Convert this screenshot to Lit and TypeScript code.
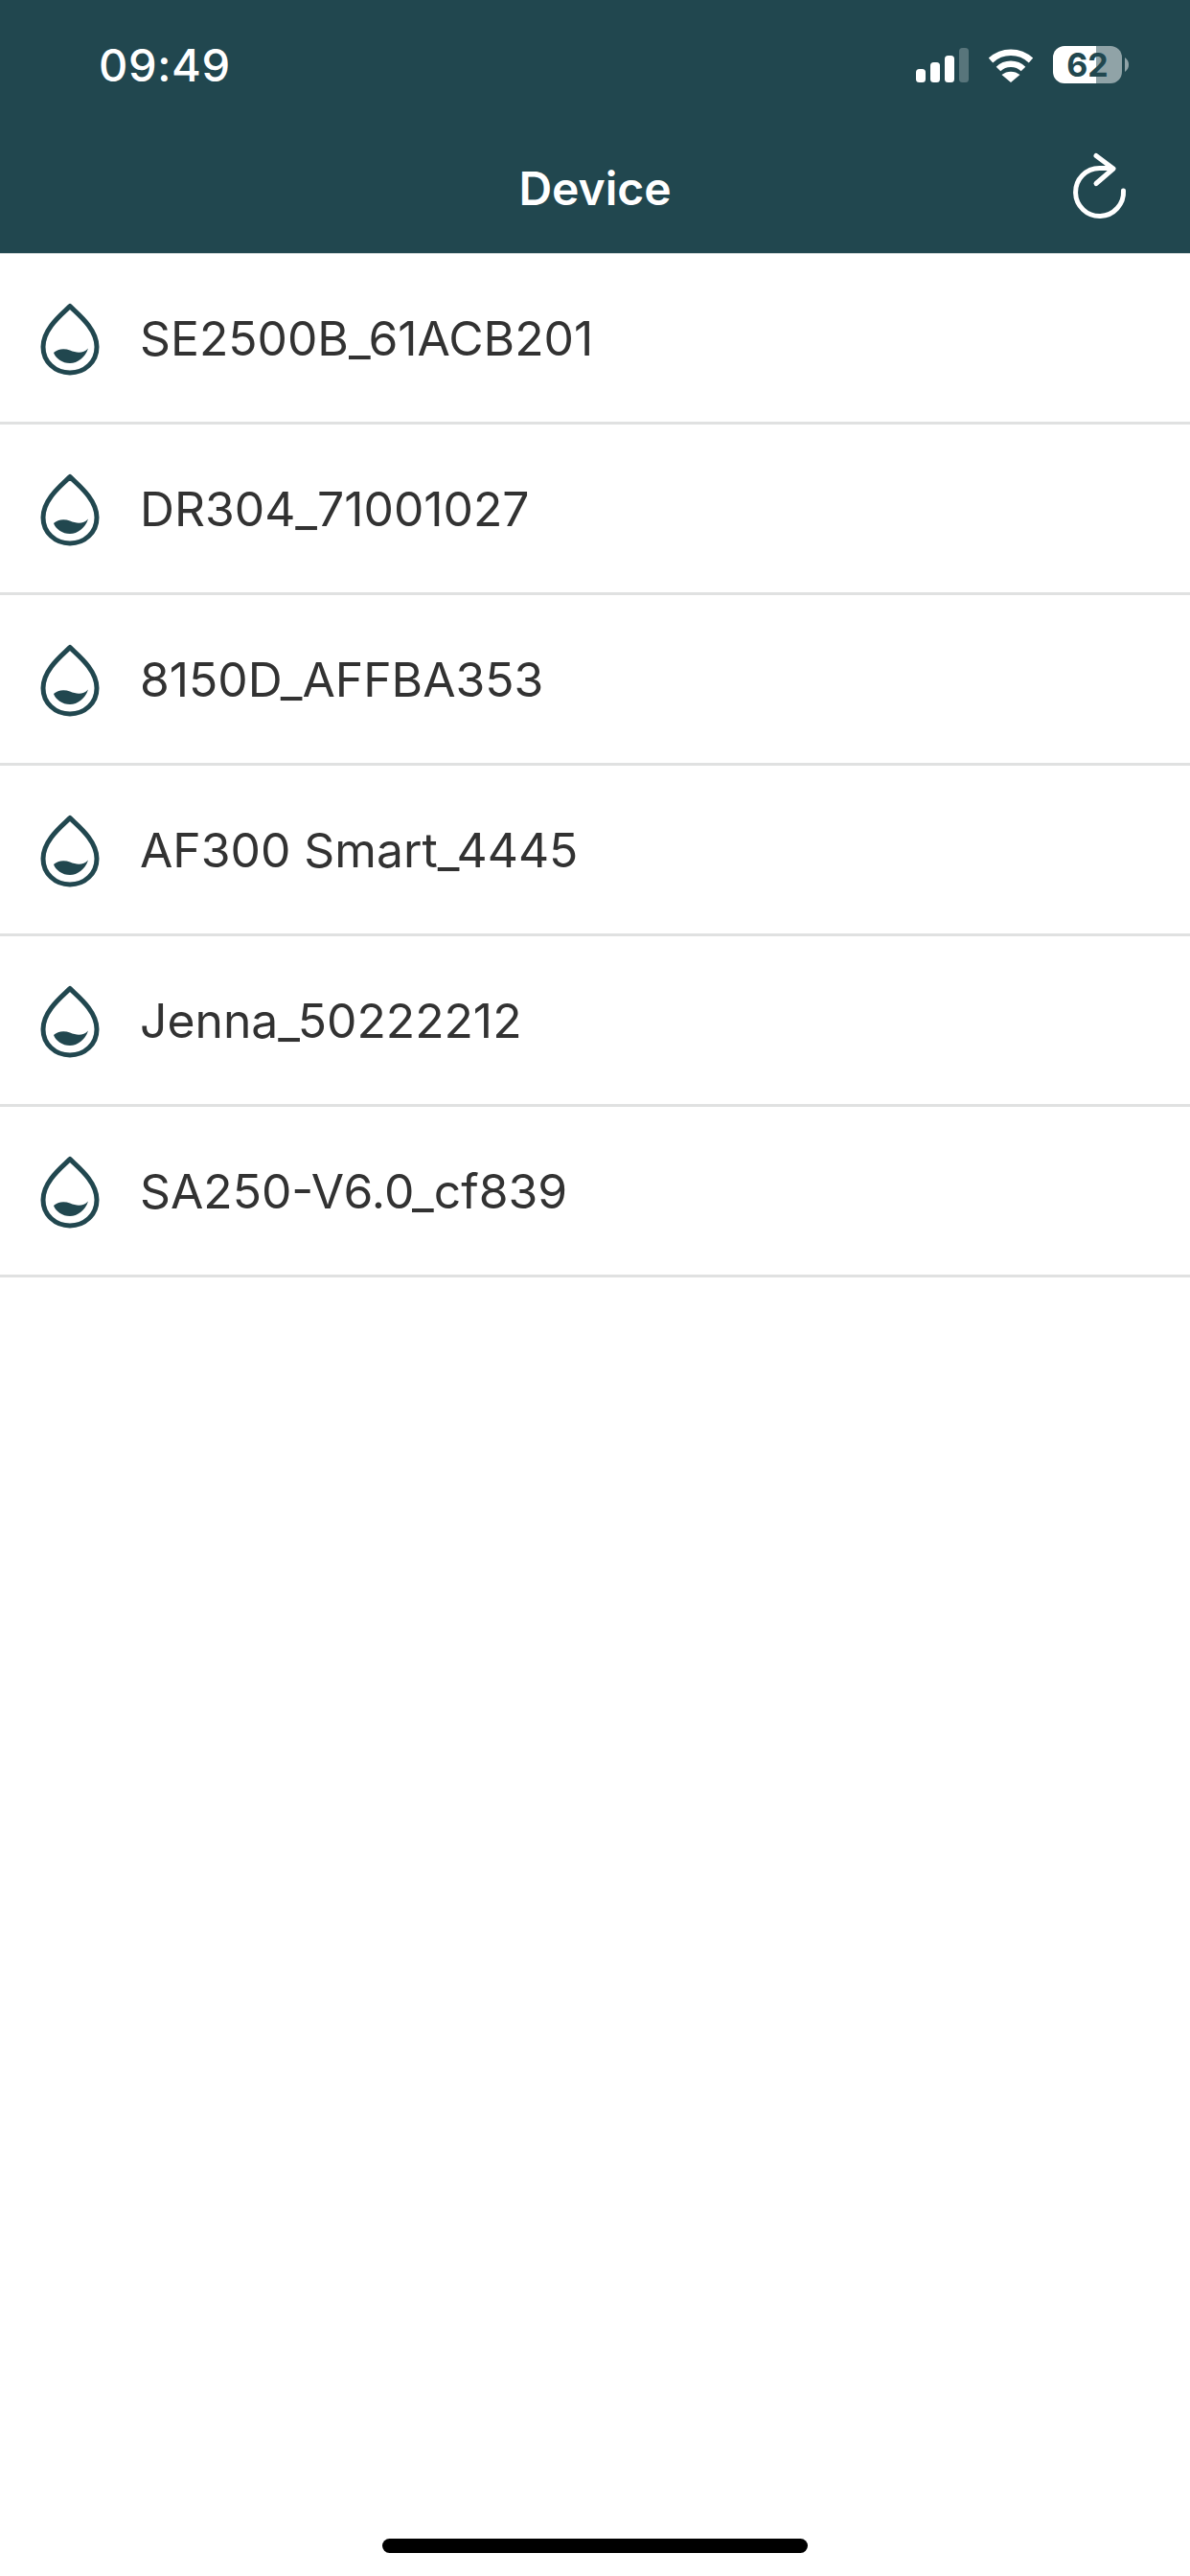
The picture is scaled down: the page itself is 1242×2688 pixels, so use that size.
import { LitElement, html, css, svg } from "lit";
import { customElement } from "lit/decorators.js";

const DEVICES = ["SE2500B_61ACB201", "DR304_71001027", "8150D_AFFBA353", "AF300 Smart_4445", "Jenna_50222212", "SA250-V6.0_cf839"];

const drop = svg`<svg class="drop" viewBox="0 0 62 76" width="62" height="76">
  <path d="M31 3.5 C25 10 3 26 3 46 C3 61.5 15.5 73 31 73 C46.5 73 59 61.5 59 46 C59 26 37 10 31 3.5 Z" fill="none" stroke="#21474F" stroke-width="5" stroke-linejoin="round"/>
  <path d="M14 52 C18 48 25 47 31 49.5 C38 52.5 45 53 50 47.5 C47 57 39 63 31 63 C23 63 16 58 14 52 Z" fill="#21474F"/>
</svg>`;

@customElement("app-root")
export class AppRoot extends LitElement {
  static styles = css`
    :host { display: block; width: 1242px; height: 2688px; background: #fff; font-family: Inter, "Liberation Sans", sans-serif; position: relative; overflow: hidden; }
    .head { background: #21474F; height: 264px; color: #fff; display: flex; flex-direction: column; border-bottom: 1px solid #c6cfd0; box-sizing: content-box; }
    .status { height: 132px; display: flex; align-items: center; justify-content: space-between; padding: 0 64px 0 103px; box-sizing: border-box; }
    .time { font-size: 47px; font-weight: 500; letter-spacing: 0.6px; line-height: 1; margin-top: 2px; }
    .icons { display: flex; align-items: center; gap: 20px; margin-top: 3px; }
    .batt { position: relative; width: 79px; height: 39px; display: block; }
    .pct { position: absolute; left: 0; top: 0; width: 72px; height: 39px; line-height: 39px; text-align: center; font-size: 34px; font-weight: 700; color: #21474F; }
    .nav { height: 132px; display: flex; align-items: center; justify-content: center; position: relative; }
    .title { font-size: 48px; font-weight: 600; line-height: 1; margin-top: -3px; }
    .refresh { position: absolute; left: 1118px; top: 26px; }
    .row { height: 178px; display: flex; align-items: center; gap: 42px; padding: 3px 0 0 42px; border-bottom: 3px solid #e0e1e1; box-sizing: border-box; }
    .row:first-of-type { height: 176px; padding-top: 0; }
    .row .drop { flex: none; }
    .name { font-size: 49.8px; color: #323232; line-height: 1; }
    .home { position: absolute; left: 399px; top: 2649px; width: 444px; height: 15px; border-radius: 8px; background: #000; }
  `;

  render() {
    return html`
      <div class="head">
        <div class="status">
          <span class="time">09:49</span>
          <div class="icons">
            <svg width="55" height="36" viewBox="0 0 55 36">
              <rect x="0" y="22" width="10" height="14" rx="3.5" fill="#fff"/>
              <rect x="15" y="15" width="10" height="21" rx="3.5" fill="#fff"/>
              <rect x="30" y="8" width="10" height="28" rx="3.5" fill="#fff"/>
              <rect x="45" y="0" width="10" height="36" rx="3.5" fill="#fff" fill-opacity=".25"/>
            </svg>
            <svg width="48" height="36" viewBox="0 0 48 36" fill="none" stroke="#fff" stroke-width="6.5">
              <path d="M3 13 C15 2 33 2 45 13"/>
              <path d="M11 22 C18 15 30 15 37 22"/>
              <path d="M24 36 L14.5 28 C20 23.5 28 23.5 33.5 28 Z" fill="#fff" stroke="none"/>
            </svg>
            <span class="batt">
              <svg width="79" height="39" viewBox="0 0 79 39">
                <path d="M12 0 H45 V39 H12 A12 12 0 0 1 0 27 V12 A12 12 0 0 1 12 0 Z" fill="#fff"/>
                <path d="M45 0 H60 A12 12 0 0 1 72 12 V27 A12 12 0 0 1 60 39 H45 Z" fill="#fff" fill-opacity=".5"/>
                <path d="M75 12 C78 14 79 17 79 19.5 C79 22 78 25 75 27 Z" fill="#fff" fill-opacity=".5"/>
              </svg>
              <span class="pct">62</span>
            </span>
          </div>
        </div>
        <div class="nav">
          <span class="title">Device</span>
          <svg class="refresh" width="60" height="72" viewBox="0 0 60 72" fill="none" stroke="#fff" stroke-width="5" stroke-linecap="round" stroke-linejoin="round">
            <path d="M54.5 41 A25 25 0 1 1 29.5 17.5 H42"/>
            <path d="M26 4.5 L44 18 L26 33.5"/>
          </svg>
        </div>
      </div>
      ${DEVICES.map((d) => html`<div class="row">${drop}<span class="name">${d}</span></div>`)}
      <div class="home"></div>
    `;
  }
}
